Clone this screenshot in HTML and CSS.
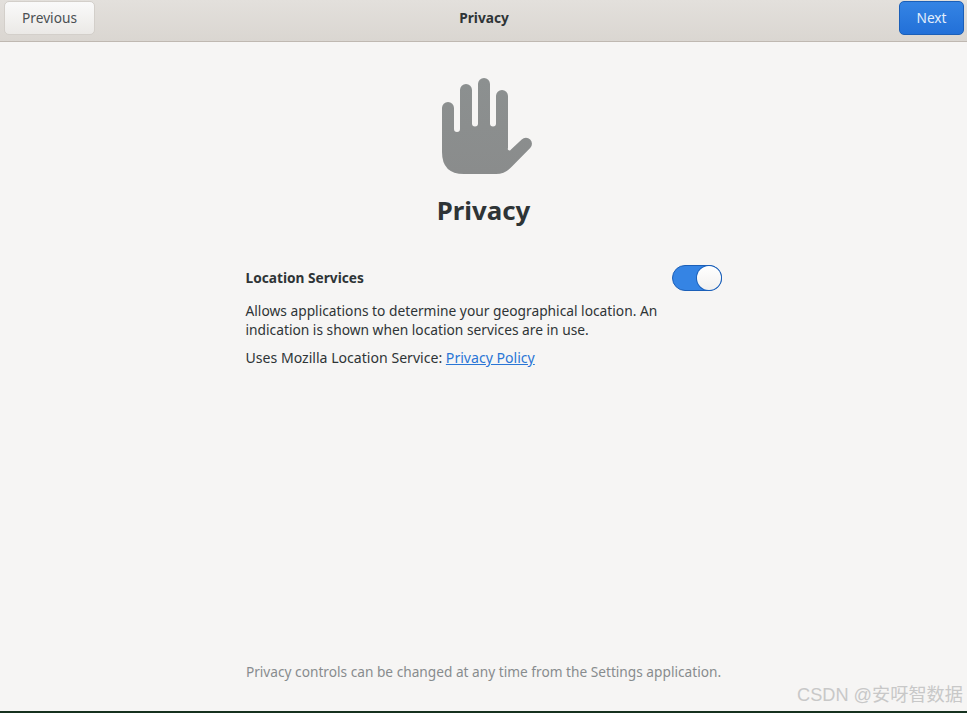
FILE: index.html
```html
<!DOCTYPE html>
<html lang="en">
<head>
<meta charset="utf-8">
<title>Privacy</title>
<link rel="stylesheet" href="styles.css">
</head>
<body>
<div class="window">
  <header class="headerbar">
    <div class="headerbar-start"><button class="btn btn-default" type="button">Previous</button></div>
    <div class="headerbar-title">Privacy</div>
    <div class="headerbar-end"><button class="btn btn-primary" type="button">Next</button></div>
  </header>
  <main class="content">
    <svg class="hand" viewBox="434 77 99 98" width="99" height="98" aria-hidden="true">
      <defs>
        <linearGradient id="handFill" x1="0" y1="0" x2="0" y2="1">
          <stop offset="0" stop-color="#8c9090"/>
          <stop offset="1" stop-color="#8a8c8c"/>
        </linearGradient>
      </defs>
      <path fill="url(#handFill)" d="M442 108a6 6 0 0 1 12 0V129a3 3 0 0 0 6 0V90a6 6 0 0 1 12 0V123.500a3 3 0 0 0 6 0V84a6 6 0 0 1 12 0V123.500a3 3 0 0 0 6 0V96a6 6 0 0 1 12 0V148a1.500 1.500 0 0 0 3 1.500L521.700 139.500a6 6 0 0 1 8.500 8.500L511.700 166.700Q505 174 496 174H464Q442 174 442 152Z"/>
    </svg>
    <h1 class="page-title">Privacy</h1>
    <section class="panel">
      <div class="setting-row">
        <span class="setting-label">Location Services</span>
        <span class="switch" role="switch" aria-checked="true"><span class="switch-knob"></span></span>
      </div>
      <p class="desc">Allows applications to determine your geographical location. An indication is shown when location services are in use.</p>
      <p class="policy">Uses Mozilla Location Service: <a class="link" href="#">Privacy Policy</a></p>
    </section>
    <p class="footnote">Privacy controls can be changed at any time from the Settings application.</p>
  </main>
  <div class="bottom-strip"></div>
</div>
<div class="watermark">CSDN @安呀智数据</div>
</body>
</html>
```
FILE: styles.css
```css
* { box-sizing: border-box; }
html, body { margin: 0; height: 100%; }
body {
  font-family: "Noto Sans", "Noto Sans CJK SC", sans-serif;
  font-size: 13.7px;
  color: #2e3436;
  background: #f6f5f4;
  overflow: hidden;
}
.window {
  height: 713px;
  display: flex;
  flex-direction: column;
}
.headerbar {
  height: 42px;
  flex: none;
  display: grid;
  grid-template-columns: 1fr auto 1fr;
  align-items: start;
  padding: 1px 3px 0 4px;
  background: linear-gradient(#e3e0dc, #dad6d1);
  border-bottom: 1px solid #bfb8b1;
}
.headerbar-end { display: flex; justify-content: flex-end; }
.btn {
  height: 34px;
  border-radius: 5px;
  font: inherit;
  padding: 0 0 2px;
}
.btn-default {
  width: 91px;
  color: #4b5052;
  background: linear-gradient(#fafafa, #ebe9e6);
  border: 1px solid #d3cfca;
}
.btn-primary {
  width: 65px;
  color: #e4eefb;
  background: linear-gradient(#3584e4, #2270d8);
  border: 1px solid #1b5fb8;
}
.headerbar-title {
  font-weight: 700;
  line-height: 34px;
  color: #2e3436;
}
.content {
  flex: 1;
  display: flex;
  flex-direction: column;
  align-items: center;
  padding-top: 35px;
}
.hand { display: block; flex: none; }
.page-title {
  margin: 17px 0 0;
  font-size: 25.8px;
  line-height: 36px;
  font-weight: 700;
  color: #2e3436;
}
.panel {
  width: 476px;
  margin-top: 37px;
}
.setting-row {
  display: flex;
  align-items: center;
  justify-content: space-between;
  height: 26px;
}
.setting-label { font-weight: 700; padding-bottom: 2px; }
.switch {
  width: 50px;
  height: 26px;
  border-radius: 13px;
  background: #3584e4;
  border: 1px solid #1b5fb8;
  display: flex;
  justify-content: flex-end;
}
.switch-knob {
  width: 24px;
  height: 24px;
  border-radius: 50%;
  background: linear-gradient(#ffffff, #f2f1ef);
  box-shadow: 0 0 0 1px #1b5fb8;
}
.desc {
  margin: 10px 0 0;
  width: 420px;
  font-size: 13.77px;
  line-height: 19px;
}
.policy {
  margin: 9px 0 0;
  font-size: 14.1px;
  line-height: 19px;
}
.link { color: #2a76d6; text-decoration: underline; }
.footnote {
  margin: auto 0 29px;
  color: #888c8e;
  line-height: 20px;
}
.bottom-strip {
  height: 2px;
  flex: none;
  background: #16321f;
}
.watermark {
  position: absolute;
  right: 4px;
  bottom: 7px;
  font-family: "Liberation Sans", "Noto Sans CJK SC", sans-serif;
  font-size: 18.200px;
  line-height: 22px;
  color: #c8c8c8;
}
```
